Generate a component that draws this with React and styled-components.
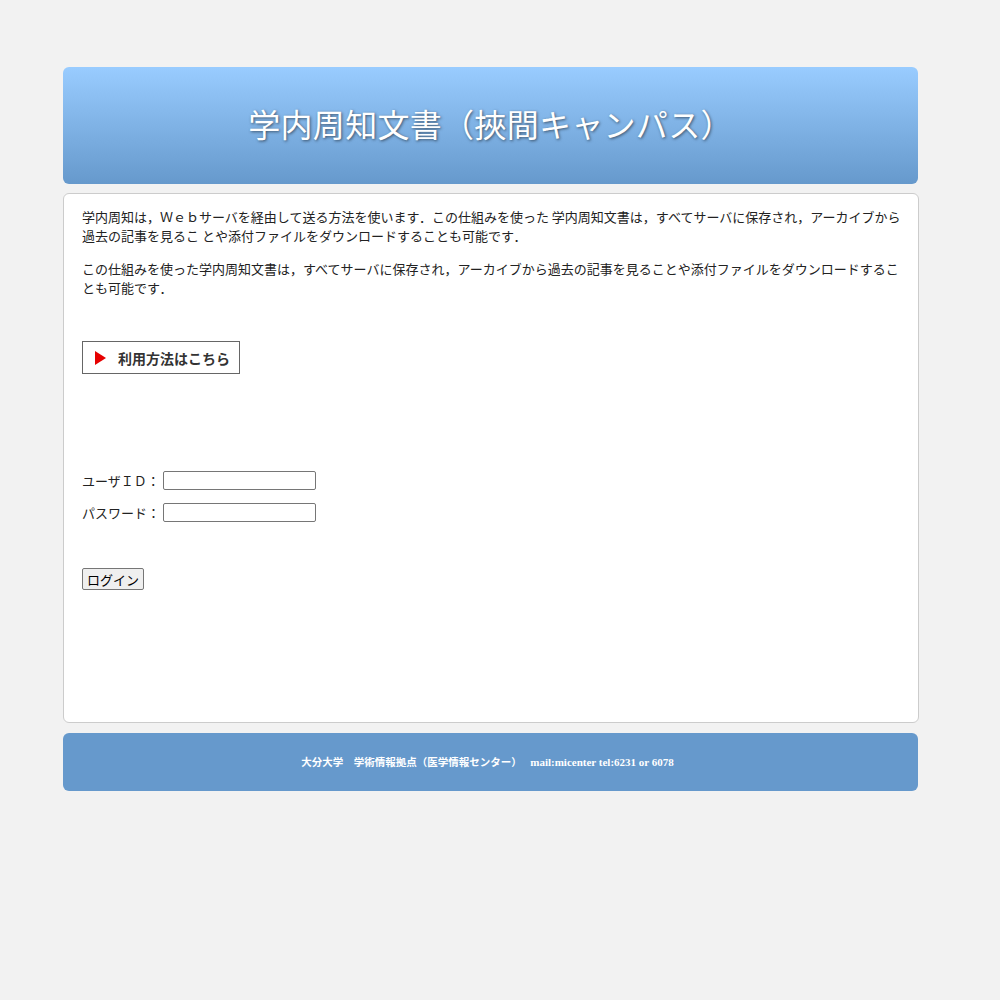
import React from "react";
import styled, { createGlobalStyle } from "styled-components";

const GlobalStyle = createGlobalStyle`
  html, body {
    margin: 0;
    padding: 0;
    background: #f2f2f2;
  }
  body {
    font-family: "Noto Sans CJK JP", "Noto Sans", sans-serif;
    color: #222;
  }
`;

const Page = styled.div`
  width: 856px;
  margin: 0 0 0 63px;
  padding: 67px 0 200px;
  display: flex;
  flex-direction: column;
`;

const Header = styled.header`
  width: 855px;
  height: 117px;
  box-sizing: border-box;
  padding-bottom: 5px;
  border-radius: 6px;
  background: linear-gradient(to bottom, #99ccff 0%, #6699cc 100%);
  display: flex;
  align-items: center;
  justify-content: center;
`;

const Title = styled.h1`
  margin: 0;
  font-size: 32px;
  font-weight: 400;
  color: #fff;
  text-shadow: 1px 1px 3px rgba(0, 0, 0, 0.55);
  letter-spacing: 0.3px;
`;

const Main = styled.main`
  margin-top: 9px;
  height: 530px;
  box-sizing: border-box;
  background: #fff;
  border: 1px solid #cccccc;
  border-radius: 6px;
  padding: 13px 12px 0 18px;
`;

const Text = styled.p`
  margin: 0 0 14px;
  font-size: 13px;
  line-height: 19px;
  color: #222;
`;

const GuideLink = styled.a`
  margin-top: 44px;
  width: 158px;
  height: 33px;
  box-sizing: border-box;
  border: 1px solid #666;
  display: flex;
  align-items: center;
  gap: 12px;
  padding-left: 12px;
  text-decoration: none;
  font-size: 14px;
  font-weight: 700;
  color: #333;
  background: #fff;
  cursor: pointer;
`;

const Triangle = styled.span`
  width: 0;
  height: 0;
  border-top: 7px solid transparent;
  border-bottom: 7px solid transparent;
  border-left: 11px solid #e60000;
`;

const Form = styled.form`
  margin-top: 97px;
  display: flex;
  flex-direction: column;
  gap: 13px;
`;

const Row = styled.label`
  display: flex;
  align-items: center;
  font-size: 13px;
  color: #222;
  height: 19px;
`;

const Input = styled.input`
  width: 153px;
  height: 19px;
  box-sizing: border-box;
  border: 1px solid #767676;
  border-radius: 2px;
  padding: 1px 2px;
  margin-left: 3px;
  font-size: 13px;
`;

const LoginButton = styled.button`
  margin-top: 33px;
  align-self: flex-start;
  width: 62px;
  height: 22px;
  padding: 0;
  font-family: "Noto Sans CJK JP", sans-serif;
  font-size: 13px;
  font-weight: 400;
  color: #000;
  background: #efefef;
  border: 1px solid #767676;
  border-radius: 2px;
`;

const Footer = styled.footer`
  margin-top: 10px;
  width: 855px;
  height: 58px;
  border-radius: 6px;
  background: #6699cc;
  display: flex;
  align-items: center;
  justify-content: center;
  padding: 0 6px 2px 0;
  box-sizing: border-box;
`;

const FooterText = styled.span`
  font-family: "Liberation Serif", "Noto Sans CJK JP", serif;
  font-size: 11px;
  font-weight: 700;
  color: #fff;
  white-space: pre;
`;

const Jp = styled.span`
  font-family: "Noto Sans CJK JP", sans-serif;
  font-size: 10.5px;
`;

export default function App() {
  return (
    <>
      <GlobalStyle />
      <Page>
        <Header>
          <Title>学内周知文書（挾間キャンパス）</Title>
        </Header>
        <Main>
          <Text>
            学内周知は，Ｗｅｂサーバを経由して送る方法を使います．この仕組みを使った 学内周知文書は，すべてサーバに保存され，アーカイブから過去の記事を見るこ とや添付ファイルをダウンロードすることも可能です．
          </Text>
          <Text>
            この仕組みを使った学内周知文書は，すべてサーバに保存され，アーカイブから過去の記事を見ることや添付ファイルをダウンロードすることも可能です．
          </Text>
          <GuideLink>
            <Triangle />
            利用方法はこちら
          </GuideLink>
          <Form onSubmit={(e) => e.preventDefault()}>
            <Row>
              ユーザＩＤ：
              <Input type="text" />
            </Row>
            <Row>
              パスワード：
              <Input type="password" />
            </Row>
            <LoginButton type="submit">ログイン</LoginButton>
          </Form>
        </Main>
        <Footer>
          <FooterText>
            <Jp>大分大学　学術情報拠点（医学情報センター）</Jp>{"　 "}mail:micenter tel:6231 or 6078
          </FooterText>
        </Footer>
      </Page>
    </>
  );
}
